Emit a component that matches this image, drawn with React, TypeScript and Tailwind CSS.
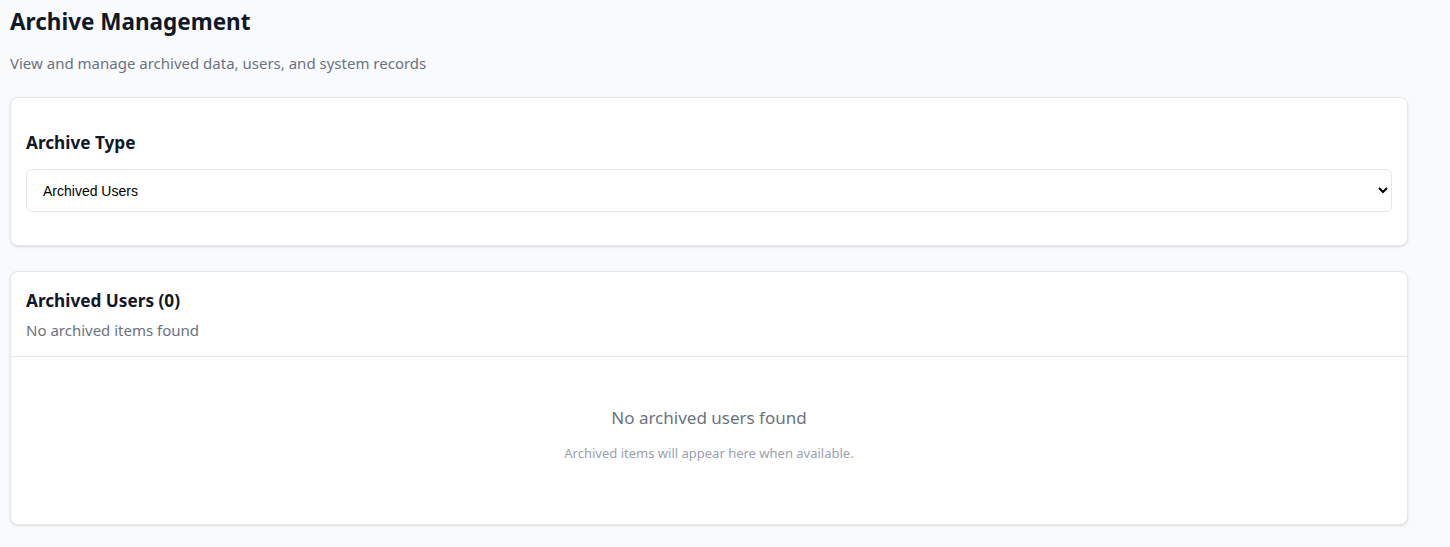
export default function App() {
  return (
    <div className="min-h-[547px] bg-gray-50 pl-[10px] pr-[42px] pt-[6px] pb-[22px] font-['Noto_Sans',sans-serif]">
      {/* Page heading */}
      <h1 className="text-[22.5px] leading-8 font-bold text-gray-900">Archive Management</h1>
      <p className="mt-[13px] text-[15px] leading-6 text-gray-500">
        View and manage archived data, users, and system records
      </p>

      {/* Archive type picker */}
      <div className="mt-[22px] bg-white border border-gray-200 rounded-lg shadow-sm px-[15px] pt-[31px] pb-[33px]">
        <h2 className="text-[17.2px] leading-7 font-bold text-gray-900">Archive Type</h2>
        <select
          defaultValue="users"
          className="mt-[12px] w-full h-[43px] pl-[12px] pr-2 bg-white border border-gray-200 rounded-md text-sm text-black font-['Liberation_Sans',sans-serif]"
        >
          <option value="users">Archived Users</option>
          <option value="records">Archived Records</option>
          <option value="data">Archived Data</option>
        </select>
      </div>

      {/* Results */}
      <div className="mt-[25px] bg-white border border-gray-200 rounded-lg shadow-sm">
        <div className="px-[15px] pt-[15px] pb-[14px] border-b border-gray-200">
          <h2 className="text-[17.2px] leading-7 font-bold text-gray-900">Archived Users (0)</h2>
          <p className="mt-[3px] text-[15px] leading-6 text-gray-500">No archived items found</p>
        </div>
        <div className="flex flex-col items-center pt-[49px] pb-[61px]">
          <p className="text-[17px] leading-6 text-gray-500">No archived users found</p>
          <p className="mt-[13px] text-[13px] leading-5 text-gray-400">
            Archived items will appear here when available.
          </p>
        </div>
      </div>
    </div>
  );
}
